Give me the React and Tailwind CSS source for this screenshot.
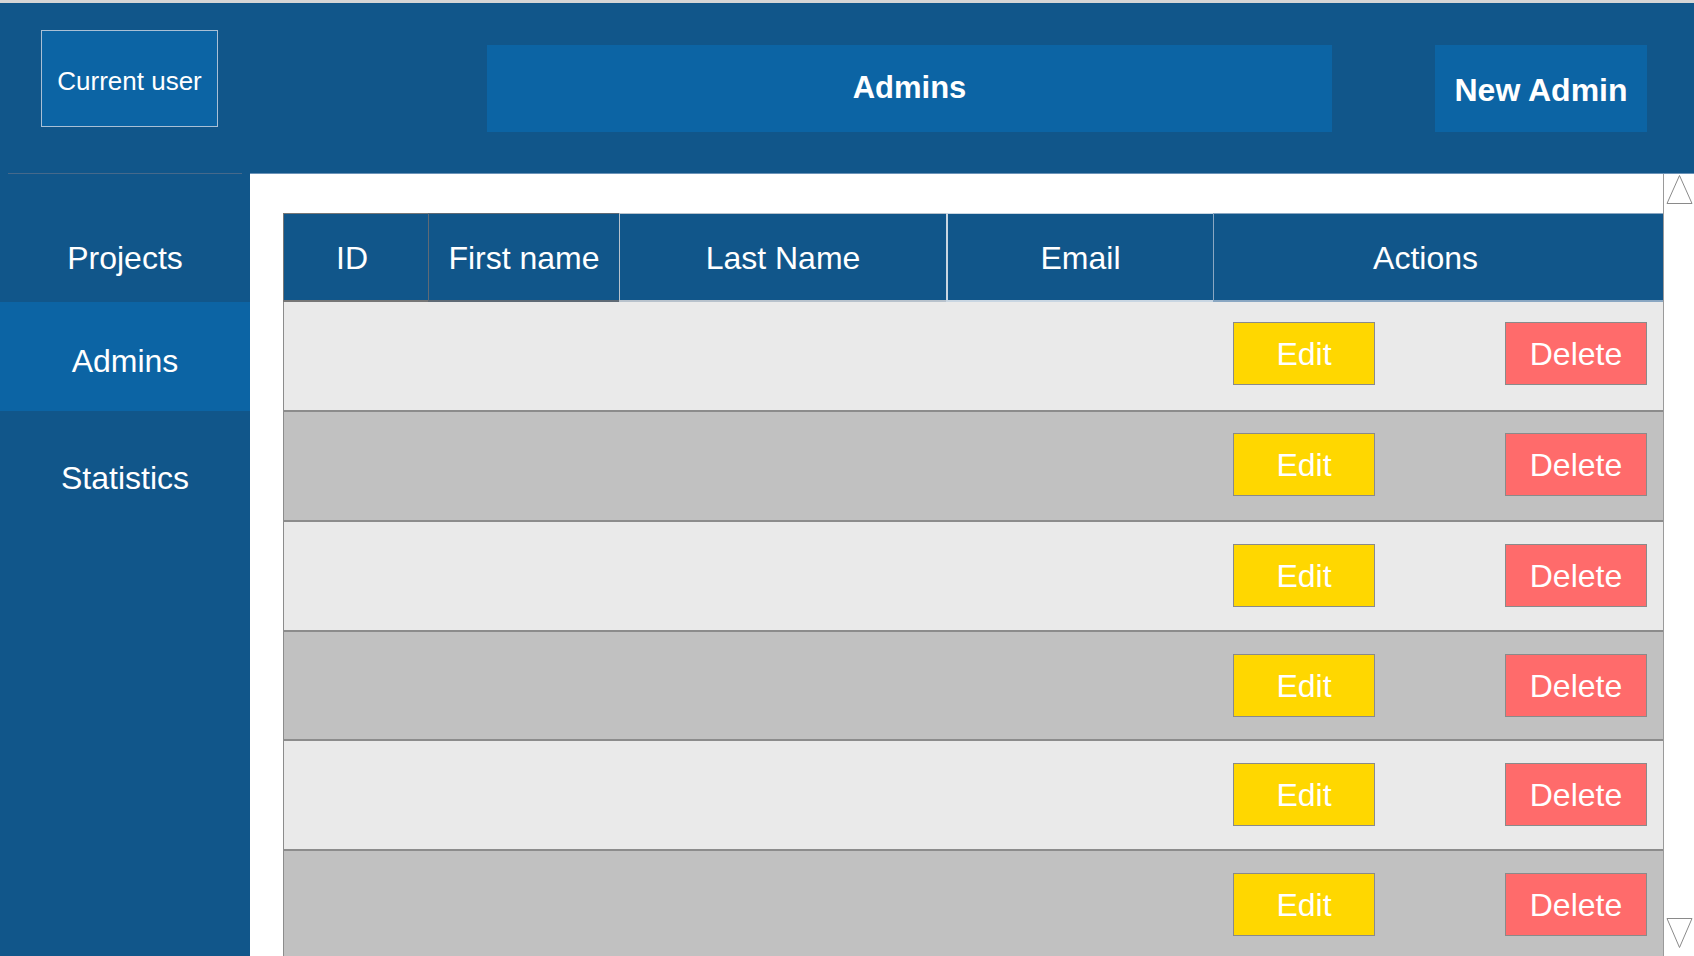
import React from "react";

const rows = [
  { bg: "bg-[#eaeaea]", h: "h-[110px]", mt: "mt-[20px]" },
  { bg: "bg-[#c1c1c1]", h: "h-[110px]", mt: "mt-[21px]" },
  { bg: "bg-[#eaeaea]", h: "h-[110px]", mt: "mt-[22px]" },
  { bg: "bg-[#c1c1c1]", h: "h-[109px]", mt: "mt-[22px]" },
  { bg: "bg-[#eaeaea]", h: "h-[110px]", mt: "mt-[22px]" },
  { bg: "bg-[#c1c1c1]", h: "h-[110px]", mt: "mt-[22px]" },
];

function Row({ r }) {
  return (
    <div className={`${r.h} ${r.bg} flex shrink-0 border-l border-b-2 border-[#8c8c8c]`}>
      <div className="w-[929px] shrink-0" />
      <div className={`ml-[20px] ${r.mt} w-[142px] h-[63px] bg-[#ffd700] border border-[#8a8a8a] text-white text-[32px] flex items-center justify-center`}>
        Edit
      </div>
      <div className={`ml-[130px] ${r.mt} w-[142px] h-[63px] bg-[#ff6b6b] border border-[#8a8a8a] text-white text-[32px] flex items-center justify-center`}>
        Delete
      </div>
    </div>
  );
}

export default function App() {
  return (
    <div className="w-[1694px] h-[956px] overflow-hidden flex flex-col bg-[#11568a] font-['Liberation_Sans',Arial,sans-serif] text-white">
      <div className="h-[3px] bg-[#d6d6d6] shrink-0" />
      <header className="h-[170px] shrink-0 flex items-start">
        <div className="ml-[41px] mt-[27px] w-[177px] h-[97px] bg-[#0c64a4] border border-[#a9c0d6] flex items-center justify-center pt-[5px] text-[26px]">
          Current user
        </div>
        <div className="ml-[269px] mt-[42px] w-[845px] h-[87px] bg-[#0c64a4] flex items-center justify-center text-[31px] font-bold">
          Admins
        </div>
        <div className="ml-[103px] mt-[42px] w-[212px] h-[87px] bg-[#0c64a4] flex items-center justify-center pt-[2px] text-[32px] font-bold">
          New Admin
        </div>
      </header>
      <div className="h-px shrink-0 flex">
        <div className="w-[250px] shrink-0 px-[8px]">
          <div className="h-px bg-[#46698b]" />
        </div>
        <div className="flex-1 bg-[#6b93b8]" />
      </div>
      <div className="flex-1 flex min-h-0">
        <aside className="w-[250px] shrink-0 flex flex-col text-[32px]">
          <div className="h-[128px] pt-[66px] text-center leading-[36px]">Projects</div>
          <div className="h-[109px] bg-[#0c64a4] flex items-center justify-center pt-[8px] leading-[36px]">Admins</div>
          <div className="pt-[49px] text-center leading-[36px]">Statistics</div>
        </aside>
        <main className="flex-1 bg-white flex min-w-0">
          <div className="w-[1413px] shrink-0 pl-[33px] pt-[39px] flex flex-col">
            <div className="h-[89px] shrink-0 flex text-[32px] bg-[#11568a]">
              <div className="w-[145px] shrink-0 border-t border-l border-b-2 border-[#777777] flex items-center justify-center pt-[2px] pr-[8px]">ID</div>
              <div className="w-[191px] shrink-0 border-t border-l border-b-2 border-[#5f6a75] flex items-center justify-center pt-[2px]">First name</div>
              <div className="w-[327px] shrink-0 border-t border-l border-b-2 border-[#b8c2cc] flex items-center justify-center pt-[2px]">Last Name</div>
              <div className="w-[267px] shrink-0 border-t border-l-2 border-b-2 border-[#c9d6e2] flex items-center justify-center pt-[2px]">Email</div>
              <div className="w-[450px] shrink-0 border-t border-l border-b-2 border-[#8aa7c2] flex items-center justify-center pt-[2px] pr-[26px]">Actions</div>
            </div>
            {rows.map((r, i) => (
              <Row key={i} r={r} />
            ))}
          </div>
          <div className="w-[31px] shrink-0 border-l border-[#9a9a9a] bg-white flex flex-col justify-between items-center pt-px pb-[8px]">
            <svg width="27" height="29" viewBox="0 0 27 29">
              <polygon points="13.5,0.5 26,28.5 1,28.5" fill="none" stroke="#8a8a8a" strokeWidth="1" />
            </svg>
            <svg width="27" height="30" viewBox="0 0 27 30">
              <polygon points="1,0.5 26,0.5 13.5,29.5" fill="none" stroke="#8a8a8a" strokeWidth="1" />
            </svg>
          </div>
        </main>
      </div>
    </div>
  );
}
